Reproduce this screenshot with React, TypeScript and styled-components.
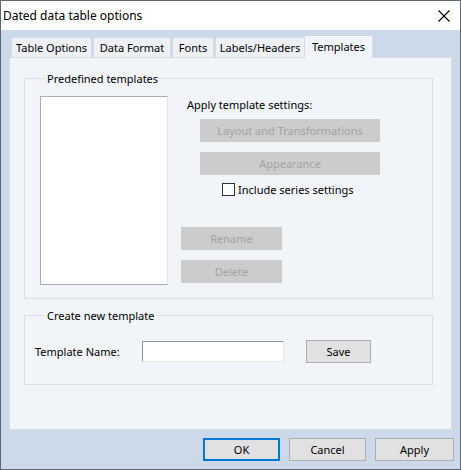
import React from 'react';
import styled, { createGlobalStyle } from 'styled-components';

const GlobalStyle = createGlobalStyle`
  html, body {
    margin: 0;
    padding: 0;
    background: #fff;
  }
  * {
    box-sizing: border-box;
  }
`;

const DialogWindow = styled.div`
  width: 461px;
  height: 470px;
  border: 1px solid #5d6672;
  background: #ccd9eb;
  display: flex;
  flex-direction: column;
  font-family: 'Noto Sans', 'Open Sans', sans-serif;
  font-size: 11px;
  color: #000;
`;

const TitleBar = styled.div`
  height: 29px;
  background: #fff;
  display: flex;
  align-items: center;
  justify-content: space-between;
  padding: 0 10px 0 2px;
  font-size: 12px;
`;

const CloseIcon = styled.svg`
  width: 12px;
  height: 12px;
`;

const Body = styled.div`
  flex: 1;
  display: flex;
  flex-direction: column;
  padding: 5px 8px 0 8px;
`;

const TabStrip = styled.div`
  display: flex;
  align-items: flex-end;
  height: 23px;
  padding-left: 2px;
  position: relative;
  z-index: 1;
  margin-bottom: -1px;
`;

const Tab = styled.div<{ $w: number; $active?: boolean }>`
  width: ${p => p.$w}px;
  height: ${p => (p.$active ? 23 : 21)}px;
  margin: ${p => (p.$active ? '0 -2px 0 -2px' : '0 1px 0 0')};
  background: ${p => (p.$active ? '#f1f4f9' : '#edf0f4')};
  border: 1px solid #d6dbe2;
  border-bottom: ${p => (p.$active ? 'none' : '1px solid #d6dbe2')};
  display: flex;
  align-items: center;
  justify-content: center;
  white-space: nowrap;
  padding-bottom: ${p => (p.$active ? 2 : 0)}px;
`;

const TabPanel = styled.div`
  height: 373px;
  background: #f1f4f9;
  border: 1px solid #d6dbe2;
  display: flex;
  flex-direction: column;
  padding: 13px 18px 0 14px;
  gap: 9px;
`;

const GroupBox = styled.fieldset<{ $h: number }>`
  margin: 0;
  min-width: 0;
  height: ${p => p.$h}px;
  border: 1px solid #dadfe6;
  padding: 0 0 0 15px;
  display: flex;
  align-items: flex-start;
`;

const Legend = styled.legend`
  padding: 0 2px;
  margin-left: 5px;
  line-height: 15px;
`;

const ListBox = styled.div`
  width: 128px;
  height: 189px;
  margin-top: 10px;
  background: #fff;
  border: 1px solid #a9adb3;
  border-right-color: #e2e4e7;
`;

const ActionColumn = styled.div`
  margin-left: 13px;
  display: flex;
  flex-direction: column;
  padding-top: 10px;
`;

const SectionLabel = styled.div`
  margin-left: 6px;
  height: 17px;
  line-height: 17px;
`;

const FlatButton = styled.div<{ $w: number; $disabled?: boolean; $default?: boolean }>`
  width: ${p => p.$w}px;
  height: 23px;
  flex-shrink: 0;
  display: flex;
  align-items: center;
  justify-content: center;
  background: ${p => (p.$disabled ? '#cccccc' : '#e1e1e1')};
  color: ${p => (p.$disabled ? '#a3a3a3' : '#000')};
  border: ${p =>
    p.$default ? '2px solid #0078d7' : p.$disabled ? '1px solid #cccccc' : '1px solid #adadad'};
`;

const ApplyButtons = styled.div`
  margin-left: 19px;
  margin-top: 6px;
  display: flex;
  flex-direction: column;
  gap: 10px;
`;

const CheckRow = styled.label`
  margin: 8px 0 0 41px;
  display: flex;
  align-items: center;
  gap: 3px;
  height: 13px;
`;

const CheckBox = styled.span`
  width: 13px;
  height: 13px;
  border: 1px solid #333;
  background: #fff;
`;

const ManageButtons = styled.div`
  margin-top: 31px;
  display: flex;
  flex-direction: column;
  gap: 10px;
`;

const NameRow = styled.div`
  display: flex;
  align-items: center;
  padding-top: 17px;
  margin-left: -5px;
`;

const FieldLabel = styled.div`
  width: 107px;
`;

const TextInput = styled.div`
  width: 142px;
  height: 21px;
  background: #fff;
  border: 1px solid #e3e5e8;
  border-top-color: #8f9399;
  border-left-color: #8f9399;
  margin-right: 22px;
`;

const Footer = styled.div`
  display: flex;
  justify-content: flex-end;
  gap: 9px;
  padding-top: 8px;
  margin-right: -2px;
`;

export default function App() {
  return (
    <>
      <GlobalStyle />
      <DialogWindow>
        <TitleBar>
          <span>Dated data table options</span>
          <CloseIcon viewBox="0 0 12 12">
            <path d="M0.5 0.5 L11.5 11.5 M11.5 0.5 L0.5 11.5" stroke="#000" strokeWidth="1.1" />
          </CloseIcon>
        </TitleBar>
        <Body>
          <TabStrip>
            <Tab $w={81}>Table Options</Tab>
            <Tab $w={78}>Data Format</Tab>
            <Tab $w={42}>Fonts</Tab>
            <Tab $w={90}>Labels/Headers</Tab>
            <Tab $w={69} $active>Templates</Tab>
          </TabStrip>
          <TabPanel>
            <GroupBox $h={228}>
              <Legend>Predefined templates</Legend>
              <ListBox />
              <ActionColumn>
                <SectionLabel>Apply template settings:</SectionLabel>
                <ApplyButtons>
                  <FlatButton $w={180} $disabled>Layout and Transformations</FlatButton>
                  <FlatButton $w={180} $disabled>Appearance</FlatButton>
                </ApplyButtons>
                <CheckRow>
                  <CheckBox />
                  Include series settings
                </CheckRow>
                <ManageButtons>
                  <FlatButton $w={101} $disabled>Rename</FlatButton>
                  <FlatButton $w={101} $disabled>Delete</FlatButton>
                </ManageButtons>
              </ActionColumn>
            </GroupBox>
            <GroupBox $h={77}>
              <Legend>Create new template</Legend>
              <NameRow>
                <FieldLabel>Template Name:</FieldLabel>
                <TextInput />
                <FlatButton $w={65}>Save</FlatButton>
              </NameRow>
            </GroupBox>
          </TabPanel>
          <Footer>
            <FlatButton $w={77} $default>OK</FlatButton>
            <FlatButton $w={77}>Cancel</FlatButton>
            <FlatButton $w={79}>Apply</FlatButton>
          </Footer>
        </Body>
      </DialogWindow>
    </>
  );
}
